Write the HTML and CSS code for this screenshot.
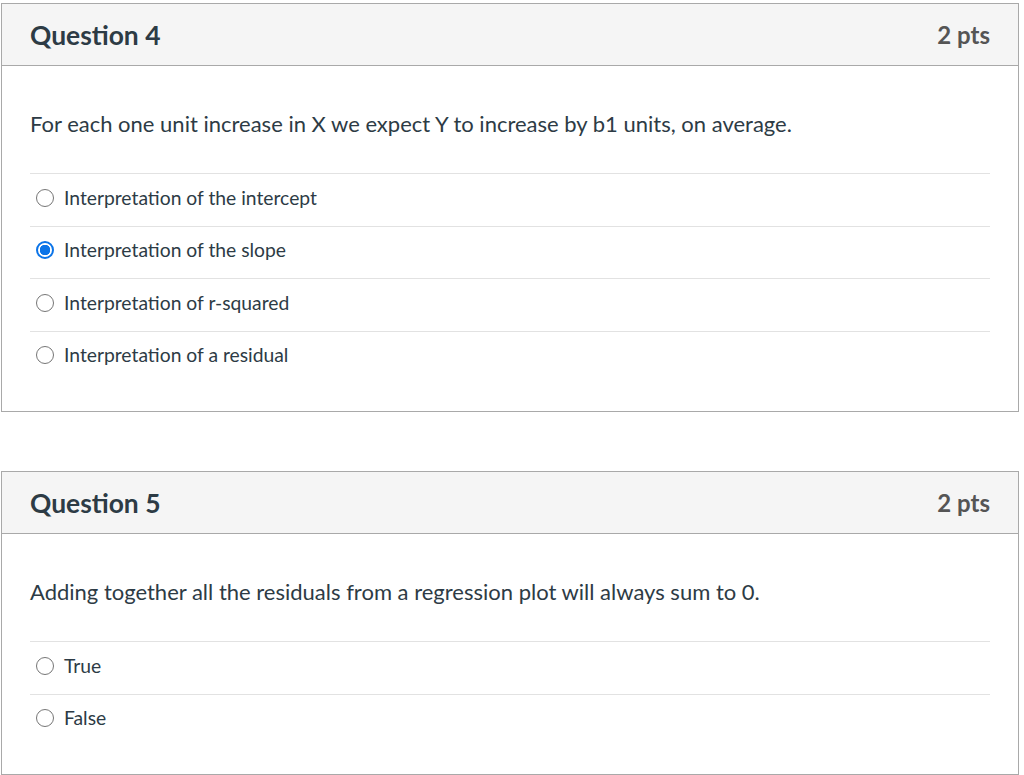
FILE: index.html
```html
<!DOCTYPE html>
<html>
<head>
<meta charset="utf-8">
<link rel="stylesheet" href="styles.css">
</head>
<body>
<div class="page">
  <section class="question">
    <header class="q-header">
      <h2 class="q-title">Question 4</h2>
      <span class="q-pts">2 pts</span>
    </header>
    <div class="q-body">
      <p class="q-text">For each one unit increase in X we expect Y to increase by b1 units, on average.</p>
      <ul class="answers">
        <li class="answer"><span class="radio"></span><span class="label">Interpretation of the intercept</span></li>
        <li class="answer"><span class="radio checked"></span><span class="label">Interpretation of the slope</span></li>
        <li class="answer"><span class="radio"></span><span class="label">Interpretation of r-squared</span></li>
        <li class="answer"><span class="radio"></span><span class="label">Interpretation of a residual</span></li>
      </ul>
    </div>
  </section>
  <section class="question">
    <header class="q-header">
      <h2 class="q-title">Question 5</h2>
      <span class="q-pts">2 pts</span>
    </header>
    <div class="q-body">
      <p class="q-text">Adding together all the residuals from a regression plot will always sum to 0.</p>
      <ul class="answers">
        <li class="answer"><span class="radio"></span><span class="label">True</span></li>
        <li class="answer"><span class="radio"></span><span class="label">False</span></li>
      </ul>
    </div>
  </section>
</div>
</body>
</html>
```
FILE: styles.css
```css
html, body {
  margin: 0;
  padding: 0;
  background: #ffffff;
}
body {
  font-family: Lato, "Noto Sans", "Liberation Sans", sans-serif;
  color: #2d3b45;
}
.page {
  display: flex;
  flex-direction: column;
  gap: 59px;
  padding: 3px 0 0 1px;
  width: 1018px;
}
.question {
  border: 1px solid #a9a9a9;
  background: #fff;
}
.q-header {
  display: flex;
  justify-content: space-between;
  align-items: center;
  height: 62px;
  box-sizing: border-box;
  padding: 0 28px 0 28px;
  background: #f5f5f5;
  border-bottom: 1px solid #a9a9a9;
}
.q-title {
  margin: 0;
  font-size: 26.4px;
  font-weight: 700;
  color: #2d3b45;
}
.q-pts {
  font-size: 24px;
  font-weight: 700;
  color: #555555;
}
.q-body {
  padding: 43px 28px 28px 28px;
}
.q-text {
  margin: 0 0 34px;
  font-size: 22px;
  line-height: 30px;
}
.answers {
  list-style: none;
  margin: 0;
  padding: 0;
}
.answer {
  display: flex;
  align-items: center;
  gap: 10px;
  height: 52.5px;
  box-sizing: border-box;
  border-top: 1px solid #e2e2e2;
  padding: 0 0 4px 6px;
  font-size: 19.3px;
}
.radio {
  width: 16px;
  height: 16px;
  border: 1px solid #767676;
  border-radius: 50%;
  box-sizing: content-box;
  flex: none;
}
.radio.checked {
  width: 14px;
  height: 14px;
  border: 2px solid #0b74e8;
  background: radial-gradient(circle, #0b74e8 0 5px, #fff 5.5px);
}
.label {
  line-height: 24px;
}
```
